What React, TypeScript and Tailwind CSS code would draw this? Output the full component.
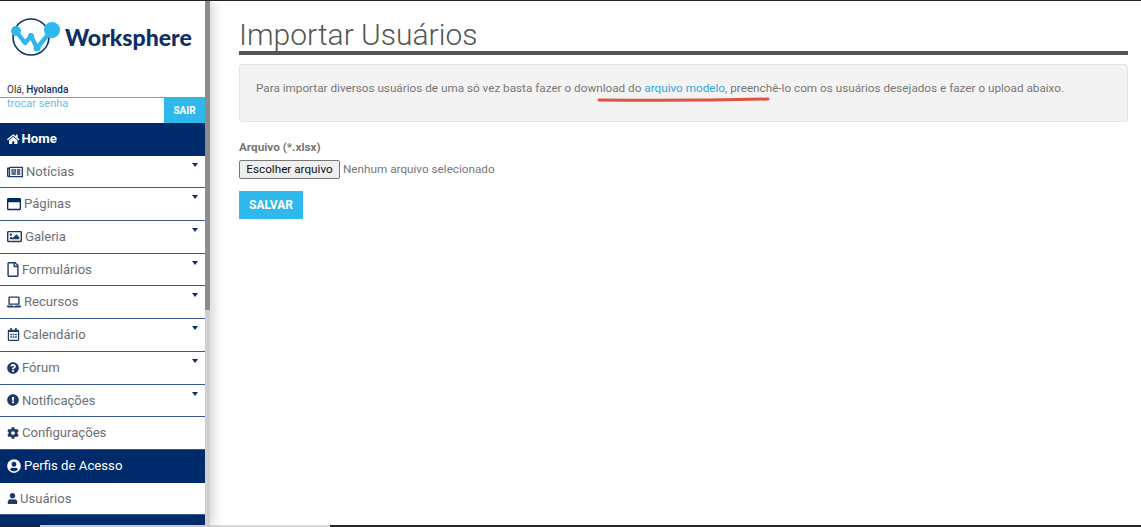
import { FaHome, FaRegNewspaper, FaRegWindowMaximize, FaRegImage, FaRegFile, FaLaptop, FaRegCalendarAlt, FaQuestionCircle, FaExclamationCircle, FaCog, FaUserCircle, FaUser } from "react-icons/fa";
import type { ReactNode } from "react";

type Item = { label: string; icon: ReactNode; caret?: boolean; dark?: boolean; bold?: boolean };

const items: Item[] = [
  { label: "Home", icon: <FaHome className="text-[12.5px] -mr-[1px]" />, dark: true, bold: true },
  { label: "Notícias", icon: <FaRegNewspaper className="text-[16px]" />, caret: true },
  { label: "Páginas", icon: <FaRegWindowMaximize className="text-[14px] text-[#002b6b]" />, caret: true },
  { label: "Galeria", icon: <FaRegImage className="text-[15px]" />, caret: true },
  { label: "Formulários", icon: <FaRegFile className="w-[12px] h-[15px]" />, caret: true },
  { label: "Recursos", icon: <FaLaptop className="text-[14px]" />, caret: true },
  { label: "Calendário", icon: <FaRegCalendarAlt className="text-[13px]" />, caret: true },
  { label: "Fórum", icon: <FaQuestionCircle className="text-[12px]" />, caret: true },
  { label: "Notificações", icon: <FaExclamationCircle className="text-[12px]" />, caret: true },
  { label: "Configurações", icon: <FaCog className="text-[12px]" /> },
  { label: "Perfis de Acesso", icon: <FaUserCircle className="text-[14px]" />, dark: true },
  { label: "Usuários", icon: <FaUser className="text-[11px] -mr-[1px]" /> },
];

function Logo() {
  return (
    <div className="flex items-center h-[42px] pl-[12px]">
      <svg width="50" height="40" viewBox="0 0 50 40" className="shrink-0 overflow-visible">
        <circle cx="19" cy="20" r="18" fill="none" stroke="#0d2f66" strokeWidth="1.6" />
        <path d="M4 14 L13 26 L19 19 L25 31 L40 13" fill="none" stroke="#2fb8ec" strokeWidth="4.5" strokeLinejoin="round" strokeLinecap="round" />
        <circle cx="4" cy="14" r="5" fill="#2fb8ec" />
        <circle cx="19" cy="19" r="3" fill="#2fb8ec" />
        <circle cx="25" cy="31" r="3.5" fill="#2fb8ec" />
        <circle cx="40" cy="13" r="8" fill="#2fb8ec" />
      </svg>
      <span className="ml-[3px] font-['Lato',sans-serif] font-black text-[23px] leading-none text-[#0d2f66]">Worksphere</span>
    </div>
  );
}

function MenuRow({ item }: { item: Item }) {
  return (
    <div
      className={
        item.dark
          ? "relative flex items-center gap-[3px] h-[32.7px] shrink-0 pl-[7px] bg-[#002b6b] text-white text-[13.2px]"
          : "relative flex items-center gap-[3px] h-[32.7px] shrink-0 pl-[7px] bg-white border-b border-[#39598c] text-[#6a6f78] text-[13.1px]"
      }
    >
      <span className={item.dark ? "text-white" : "text-[#1f3a66]"}>{item.icon}</span>
      <span className={item.bold ? "font-bold" : "font-normal"}>{item.label}</span>
      {item.caret && (
        <span className="absolute right-[7px] top-[7px] w-0 h-0 border-x-[3.5px] border-x-transparent border-t-[4px] border-t-[#0d2f66]" />
      )}
    </div>
  );
}

export default function App() {
  return (
    <div className="flex flex-col h-[527px] w-[1141px] overflow-hidden bg-white font-['Roboto',sans-serif]">
      <div className="h-px shrink-0 bg-[#20262b]" />
      <div className="flex flex-1 min-h-0">
        {/* Sidebar */}
        <aside className="flex w-[210px] shrink-0 shadow-[4px_0_10px_rgba(0,0,0,0.16)] z-10">
          <div className="flex flex-col w-[205px] overflow-hidden bg-white">
            <div className="pt-[15px] shrink-0">
              <Logo />
            </div>
            <div className="mt-[25px] shrink-0 pl-[7px] text-[10px] leading-[14px] text-[#333]">
              Olá, <span className="font-medium text-[#0d2f66]">Hyolanda</span>
            </div>
            <div className="flex shrink-0 h-[26px] border-t border-[#2fb8ec]">
              <span className="flex-1 pl-[7px] text-[11px] leading-[12px] text-[#5cc3ea]">trocar senha</span>
              <span className="flex items-center justify-center w-[41px] bg-[#2fb8ec] text-white text-[10px] font-bold">SAIR</span>
            </div>
            <nav className="flex flex-col shrink-0">
              {items.map((item) => (
                <MenuRow key={item.label} item={item} />
              ))}
              <div className="h-[12px] shrink-0 bg-[#002b6b]" />
            </nav>
          </div>
          <div className="w-[5px] bg-[#d0d0d0]">
            <div className="h-[309px] bg-[#8c8c8c]" />
          </div>
        </aside>

        {/* Content */}
        <main className="relative flex-1 pl-[29px] pr-[13px]">
          <h1 className="pt-[17px] text-[30px] leading-[34px] font-light text-[#555] border-b-[4px] border-[#555] h-[54px]">
            Importar Usuários
          </h1>
          <div className="mt-[9px] flex items-start h-[58px] pt-[15px] pl-[16px] bg-[#f3f3f3] border border-[#e6e6e6] rounded-[3px] text-[11.72px] leading-[16px] text-[#777]">
            <p>
              Para importar diversos usuários de uma só vez basta fazer o download do{" "}
              <span className="text-[#2fa9e0]">arquivo modelo</span>, preenchê-lo com os usuários desejados e fazer o upload abaixo.
            </p>
          </div>
          <label className="block mt-[18px] text-[11.72px] leading-[14px] font-bold text-[#777]">Arquivo (*.xlsx)</label>
          <div className="flex items-center mt-[6px]">
            <button className="h-[19px] w-[101px] bg-[#efefef] border border-[#767676] rounded-[2px] text-[11.72px] leading-none text-[#111]">
              Escolher arquivo
            </button>
            <span className="ml-[3px] text-[11.72px] text-[#777]">Nenhum arquivo selecionado</span>
          </div>
          <button className="block mt-[12px] h-[28px] w-[64px] bg-[#2fb8ec] text-white text-[12px] font-bold">SALVAR</button>

          {/* marcação vermelha sobre o print */}
          <svg width="180" height="8" viewBox="0 0 180 8" className="absolute left-[386px] top-[95px]">
            <path d="M3 4 Q90 5 172 3" fill="none" stroke="#e0523f" strokeWidth="3" strokeLinecap="round" />
          </svg>
        </main>
      </div>
      <div className="flex h-[2px] shrink-0 bg-[#20262b]">
        <div className="w-[40px]" />
        <div className="w-[290px] bg-[#d8d8d8]" />
      </div>
    </div>
  );
}
